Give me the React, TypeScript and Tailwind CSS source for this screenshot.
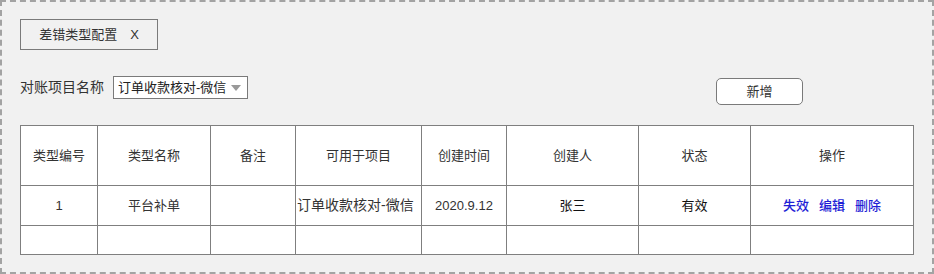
import React from 'react';

const cols = 'grid-cols-[77px_113px_85px_126px_85px_132px_112px_163px]';

const headers = ['类型编号', '类型名称', '备注', '可用于项目', '创建时间', '创建人', '状态', '操作'];

function Cell({ children, className = '' }: { children?: React.ReactNode; className?: string }) {
  return (
    <div className={`flex items-center justify-center border-r border-b border-[#7f7f7f] bg-white ${className}`}>
      {children}
    </div>
  );
}

export default function App() {
  return (
    <div
      className="w-[934px] h-[274px] bg-[#f1f1f1] border-2 border-dashed border-[#a3a3a3] pl-[18px] pt-[17px] text-[13px] text-[#333]"
      style={{ fontFamily: '"Liberation Sans", "Noto Sans CJK SC", sans-serif' }}
    >
      <div className="w-[138px] h-[31px] border border-[#7a7a7a] flex items-center justify-center gap-[13px] text-[#333]">
        <span>差错类型配置</span>
        <span>X</span>
      </div>

      <div className="flex items-start mt-[26px] h-[28px]">
        <div className="flex items-center">
          <span className="text-[14px] text-[#333] mr-[9px]">对账项目名称</span>
          <div className="w-[135px] h-[23px] bg-white border border-[#7a7a7a] flex items-center justify-between pl-[4px] pr-[6px]">
            <span className="text-[13px] text-[#222]">订单收款核对-微信</span>
            <span className="w-0 h-0 border-l-[5px] border-r-[5px] border-t-[6px] border-l-transparent border-r-transparent border-t-[#999]" />
          </div>
        </div>
        <button className="ml-[468px] mt-[2px] w-[87px] h-[27px] bg-white border border-[#7a7a7a] rounded-[5px] text-[13px] text-[#333]">
          新增
        </button>
      </div>

      <div className={`grid ${cols} w-[894px] mt-[21px] border-l border-t border-[#7f7f7f]`}>
        {headers.map((h) => (
          <Cell key={h} className="h-[60px]">{h}</Cell>
        ))}
        <Cell className="h-[40px]">1</Cell>
        <Cell className="h-[40px]">平台补单</Cell>
        <Cell className="h-[40px]" />
        <Cell className="h-[40px] text-[14px] !justify-start pl-[1px]">订单收款核对-微信</Cell>
        <Cell className="h-[40px]">2020.9.12</Cell>
        <Cell className="h-[40px] text-[#111]">张三</Cell>
        <Cell className="h-[40px] text-[#111]">有效</Cell>
        <Cell className="h-[40px] gap-[10px] text-[#1f1fd6] font-medium">
          <span>失效</span>
          <span>编辑</span>
          <span>删除</span>
        </Cell>
        {headers.map((h) => (
          <Cell key={`e-${h}`} className="h-[29px]" />
        ))}
      </div>
    </div>
  );
}
